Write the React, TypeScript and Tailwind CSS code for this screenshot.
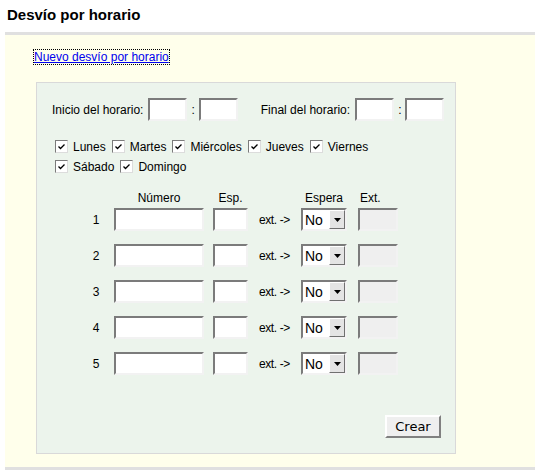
import React from "react";

const inset =
  "border-2 border-t-[#7b7b7b] border-l-[#7b7b7b] border-r-[#f2f2f2] border-b-[#f2f2f2]";

function Check() {
  return (
    <span className="inline-flex w-[13px] h-[13px] shrink-0 items-center justify-center bg-white border border-t-[#7b7b7b] border-l-[#7b7b7b] border-r-[#dcdcdc] border-b-[#dcdcdc]">
      <svg width="9" height="9" viewBox="0 0 9 9">
        <path d="M1.5 4.5 L3.5 6.5 L7.5 2.5" stroke="#000" strokeWidth="1.3" fill="none" />
      </svg>
    </span>
  );
}

function Day({ label, className = "" }: { label: string; className?: string }) {
  return (
    <span className={`inline-flex items-center ${className}`}>
      <Check />
      <span className="ml-[5px]">{label}</span>
    </span>
  );
}

function Select() {
  return (
    <div className={`w-[46px] h-[23px] ${inset} bg-white flex items-center`}>
      <span className="flex-1 pl-[2px] text-[14px] leading-none text-black">No</span>
      <span className="w-[16px] h-full bg-[#e4e4e4] border border-t-white border-l-white border-r-[#707070] border-b-[#707070] flex items-center justify-center">
        <svg width="7" height="4" viewBox="0 0 7 4">
          <path d="M0 0 H7 L3.5 4 Z" fill="#000" />
        </svg>
      </span>
    </div>
  );
}

function Row({ n }: { n: number }) {
  return (
    <div className="flex items-center h-[23px]">
      <span className="ml-[47px] w-[24px] text-center">{n}</span>
      <div className={`ml-[6px] w-[90px] h-[23px] bg-white ${inset}`} />
      <div className={`ml-[9px] w-[35px] h-[23px] bg-white ${inset}`} />
      <span className="ml-[11px] w-[31px] text-[12px] tracking-[-0.4px] whitespace-nowrap">ext. -&gt;</span>
      <div className="ml-[11px]">
        <Select />
      </div>
      <div className={`ml-[11px] w-[40px] h-[23px] bg-[#efefef] ${inset}`} />
    </div>
  );
}

export default function App() {
  return (
    <div className="w-[543px] h-[474px] bg-white font-['Liberation_Sans',Arial,sans-serif] text-[12px] text-black overflow-hidden">
      <div className="h-[32px] pl-[7px] pt-[5px] text-[15px] font-bold leading-[20px]">
        Desvío por horario
      </div>
      <div className="ml-[5px] w-[530px] h-[438px] border-t-[3px] border-b-[3px] border-[#e0e0e0] bg-[#ffffeb]">
        <div className="pl-[29px] pt-[15px] leading-[14px]">
          <a
            href="#"
            className="text-[#0000ee] underline outline-1 outline-dotted outline-black"
          >
            Nuevo desvío por horario
          </a>
        </div>
        <div className="ml-[31px] mt-[18px] w-[420px] h-[372px] border border-[#d9d9d9] bg-[#ecf4ec] flex flex-col">
          <div className="flex items-center mt-[15px] pl-[15px] h-[23px]">
            <span>Inicio del horario:</span>
            <div className={`ml-[5px] w-[39px] h-[23px] bg-white ${inset}`} />
            <span className="mx-[4px]">:</span>
            <div className={`w-[39px] h-[23px] bg-white ${inset}`} />
            <span className="ml-[23px]">Final del horario:</span>
            <div className={`ml-[5px] w-[39px] h-[23px] bg-white ${inset}`} />
            <span className="mx-[4px]">:</span>
            <div className={`w-[39px] h-[23px] bg-white ${inset}`} />
          </div>
          <div className="mt-[19px] pl-[18px] flex flex-col gap-[7px]">
            <div className="flex items-center h-[13px]">
              <Day label="Lunes" />
              <Day label="Martes" className="ml-[6px]" />
              <Day label="Miércoles" className="ml-[6px]" />
              <Day label="Jueves" className="ml-[6px]" />
              <Day label="Viernes" className="ml-[6px]" />
            </div>
            <div className="flex items-center h-[13px]">
              <Day label="Sábado" />
              <Day label="Domingo" className="ml-[6px]" />
            </div>
          </div>
          <div className="flex mt-[18px] h-[14px] leading-[14px]">
            <span className="ml-[77px] w-[90px] text-center">Número</span>
            <span className="ml-[9px] w-[35px] text-center">Esp.</span>
            <span className="ml-[53px] w-[46px] text-center">Espera</span>
            <span className="ml-[13px] w-[40px]">Ext.</span>
          </div>
          <div className="mt-[3px] flex flex-col gap-[13px]">
            {[1, 2, 3, 4, 5].map((n) => (
              <Row key={n} n={n} />
            ))}
          </div>
          <div className="flex justify-end pr-[14px] mt-[40px]">
            <button className="w-[56px] h-[23px] bg-[#efefef] border-2 border-t-white border-l-white border-r-[#808080] border-b-[#808080] font-['DejaVu_Sans',sans-serif] text-[13px] text-black">
              Crear
            </button>
          </div>
        </div>
      </div>
    </div>
  );
}
